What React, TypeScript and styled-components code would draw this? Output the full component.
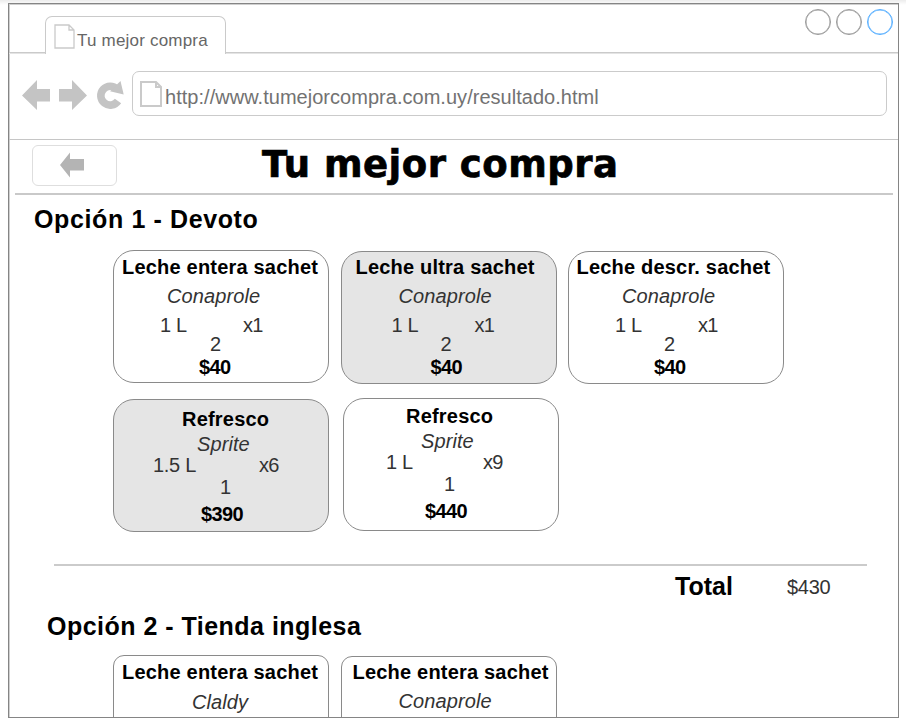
import React from 'react';
import styled, { createGlobalStyle } from 'styled-components';

const Global = createGlobalStyle`
  * { box-sizing: border-box; }
  body {
    margin: 0;
    background: linear-gradient(#ececec, #f8f8f8 3px, #fff 5px) no-repeat #fff;
    font-family: "Liberation Sans", Arial, sans-serif;
    color: #000;
    overflow: hidden;
  }
`;

const Window = styled.div`
  width: 891px;
  height: 715px;
  margin: 3px 0 0 8px;
  border: 1px solid #858585;
  box-shadow: inset 1px 1px #cfcfcf;
  background: #fff;
  overflow: hidden;
  display: flex;
  flex-direction: column;
`;

const TabStrip = styled.div`
  height: 50px;
  flex: none;
  display: flex;
  justify-content: space-between;
  align-items: flex-end;
  padding: 0 5px 0 36px;
  box-shadow: inset 0 -1px #e4e4e4, inset 0 -2px #cacaca;
`;

const Tab = styled.div`
  width: 181px;
  height: 38px;
  display: flex;
  align-items: flex-start;
  border: 1px solid #cacaca;
  border-bottom: none;
  border-radius: 7px 7px 0 0;
  background: #fff;
  padding: 7px 0 0 8px;
`;

const TabLabel = styled.span`
  margin: 8px 0 0 2px;
  font-size: 17px;
  line-height: 18px;
  letter-spacing: 0.2px;
  color: #666;
  white-space: nowrap;
`;

const Controls = styled.div`
  display: flex;
  gap: 5px;
  align-self: flex-start;
  margin-top: 5px;
`;

const Control = styled.span<{ $color: string }>`
  width: 26px;
  height: 26px;
  border: 1px solid ${(p) => p.$color};
  border-radius: 50%;
  box-shadow: inset 0 0 0 0.5px ${(p) => p.$color};
`;

const NavBar = styled.div`
  height: 86px;
  flex: none;
  display: flex;
  align-items: flex-start;
  padding: 17px 11px 0 13px;
  border-bottom: 1px solid #c6c6c6;
`;

const NavIcons = styled.div`
  width: 110px;
  height: 44px;
  flex: none;
`;

const Address = styled.div`
  flex: 1;
  height: 45px;
  display: flex;
  align-items: flex-start;
  border: 1px solid #cbcbcb;
  border-radius: 7px;
  padding: 9px 0 0 7px;
`;

const Url = styled.span`
  margin: 6px 0 0 3px;
  font-size: 20px;
  line-height: 20px;
  letter-spacing: 0.03px;
  color: #727272;
  white-space: nowrap;
`;

const TitleBar = styled.div`
  height: 55px;
  flex: none;
  display: flex;
  align-items: flex-start;
  margin: 0 5px 0 6px;
  padding: 5px 0 0 17px;
  border-bottom: 2px solid #c9c9c9;
`;

const BackButton = styled.button`
  width: 85px;
  height: 41px;
  padding: 0 0 1px 27px;
  display: flex;
  align-items: center;
  border: 1px solid #dedede;
  border-radius: 6px;
  background: #fff;
`;

const PageTitle = styled.h1`
  margin: 0 0 0 145px;
  font: bold 37px/40px "DejaVu Sans", Verdana, sans-serif;
  letter-spacing: 0.5px;
  -webkit-text-stroke: 0.7px #000;
  white-space: nowrap;
`;

const Heading = styled.h2<{ $x: number; $gap: number; $ls: number }>`
  margin: ${(p) => p.$gap}px 0 0 ${(p) => p.$x}px;
  flex: none;
  font-size: 25px;
  line-height: 26px;
  letter-spacing: ${(p) => p.$ls}px;
  white-space: nowrap;
`;

const CardRow = styled.div<{ $gap: number; $between: number }>`
  display: flex;
  flex: none;
  gap: ${(p) => p.$between}px;
  margin: ${(p) => p.$gap}px 0 0 104px;
`;

const CardBox = styled.article<{ $shaded?: boolean; $drop: number; $radius: number }>`
  width: 216px;
  height: 133px;
  flex: none;
  margin-top: ${(p) => p.$drop}px;
  border: 1px solid #8a8a8a;
  border-radius: ${(p) => p.$radius}px;
  background: ${(p) => (p.$shaded ? '#e5e5e5' : '#fff')};
`;

const Line = styled.div<{ $gap: number; $x: number }>`
  display: flex;
  height: 20px;
  margin-top: ${(p) => p.$gap}px;
  padding-left: ${(p) => p.$x}px;
  font-size: 20px;
  line-height: 20px;
  white-space: nowrap;
  color: #333;
`;

const Name = styled(Line).attrs({ as: 'h3' })`
  margin-bottom: 0;
  margin-left: 0;
  font-weight: bold;
  letter-spacing: 0.2px;
  color: #000;
`;

const Brand = styled(Line)`
  font-style: italic;
  letter-spacing: 0.1px;
`;

const Price = styled(Line)`
  font-weight: bold;
  letter-spacing: -0.6px;
  color: #000;
`;

const Size = styled.span<{ $w: number }>`
  width: ${(p) => p.$w}px;
  letter-spacing: -0.3px;
`;

const Pack = styled.span`
  letter-spacing: -0.8px;
`;

const TotalBar = styled.div`
  display: flex;
  flex: none;
  align-items: flex-start;
  height: 36px;
  margin: 32px 31px 0 45px;
  border-top: 2px solid #cbcbcb;
`;

const TotalLabel = styled.strong`
  width: 112px;
  margin: 7px 0 0 621px;
  font-size: 25px;
  line-height: 26px;
`;

const TotalValue = styled.span`
  margin-top: 11px;
  font-size: 20px;
  line-height: 20px;
  letter-spacing: -0.3px;
  color: #333;
`;

type Product = {
  name: string;
  brand: string;
  size?: string;
  pack?: string;
  qty?: string;
  price?: string;
  shaded?: boolean;
  drop?: number;
  radius?: number;
  sizeWidth?: number;
  x: number[];
  gaps: number[];
};

const firstRow: Product[] = [
  { name: 'Leche entera sachet', brand: 'Conaprole', size: '1 L', pack: 'x1', qty: '2', price: '$40', x: [8, 53, 46, 96, 85], gaps: [6, 9, 9, -1, 3], sizeWidth: 83 },
  { name: 'Leche ultra sachet', brand: 'Conaprole', size: '1 L', pack: 'x1', qty: '2', price: '$40', shaded: true, drop: 1, x: [14, 57, 50, 99, 89], gaps: [5, 9, 9, -1, 3], sizeWidth: 83 },
  { name: 'Leche descr. sachet', brand: 'Conaprole', size: '1 L', pack: 'x1', qty: '2', price: '$40', drop: 1, x: [7.5, 53, 46, 95, 85], gaps: [5, 9, 9, -1, 3], sizeWidth: 83 },
];

const secondRow: Product[] = [
  { name: 'Refresco', brand: 'Sprite', size: '1.5 L', pack: 'x6', qty: '1', price: '$390', shaded: true, drop: 1, x: [68, 83, 39, 106, 87], gaps: [9, 5, 1, 2, 7], sizeWidth: 106 },
  { name: 'Refresco', brand: 'Sprite', size: '1 L', pack: 'x9', qty: '1', price: '$440', x: [62, 77, 42, 100, 81], gaps: [7, 5, 1, 2, 7], sizeWidth: 97 },
];

const thirdRow: Product[] = [
  { name: 'Leche entera sachet', brand: 'Claldy', radius: 11, x: [8, 78], gaps: [6, 10] },
  { name: 'Leche entera sachet', brand: 'Conaprole', radius: 11, drop: 1, x: [11, 57], gaps: [5, 9] },
];

function Card({ p }: { p: Product }) {
  return (
    <CardBox $shaded={p.shaded} $drop={p.drop ?? 0} $radius={p.radius ?? 21}>
      <Name $gap={p.gaps[0]} $x={p.x[0]}>{p.name}</Name>
      <Brand $gap={p.gaps[1]} $x={p.x[1]}>{p.brand}</Brand>
      {p.size && (
        <>
          <Line $gap={p.gaps[2]} $x={p.x[2]}>
            <Size $w={p.sizeWidth ?? 83}>{p.size}</Size>
            <Pack>{p.pack}</Pack>
          </Line>
          <Line $gap={p.gaps[3]} $x={p.x[3]}>{p.qty}</Line>
          <Price $gap={p.gaps[4]} $x={p.x[4]}>{p.price}</Price>
        </>
      )}
    </CardBox>
  );
}

const PageIcon = ({ w, h, stroke }: { w: number; h: number; stroke: number }) => (
  <svg width={w} height={h} viewBox={`0 0 ${w} ${h}`} fill="none" stroke="#cacaca" strokeWidth={stroke}>
    <path d={`M1 1H${w - 6}L${w - 1} 6V${h - 1}H1ZM${w - 6} 1V6H${w - 1}`} />
  </svg>
);

export default function App() {
  return (
    <>
      <Global />
      <Window>
        <TabStrip>
          <Tab>
            <PageIcon w={21} h={25} stroke={1.3} />
            <TabLabel>Tu mejor compra</TabLabel>
          </Tab>
          <Controls>
            <Control $color="#999" />
            <Control $color="#999" />
            <Control $color="#55aeff" />
          </Controls>
        </TabStrip>

        <NavBar>
          <NavIcons>
            <svg width="104" height="44" viewBox="22 71 104 44" fill="#c4c4c4">
              <path d="M22 95.5L37 80V89H50V101.5H37V110Z" />
              <path d="M87 95.5L72 80V89H59V101.5H72V110Z" />
              <path
                d="M118 101A9.4 9.4 0 1 1 117 89.2"
                fill="none"
                stroke="#c4c4c4"
                strokeWidth="7.6"
              />
              <path d="M120.5 81L123.7 94.5L110 91.2Z" />
            </svg>
          </NavIcons>
          <Address>
            <PageIcon w={22} h={26} stroke={2} />
            <Url>http://www.tumejorcompra.com.uy/resultado.html</Url>
          </Address>
        </NavBar>

        <TitleBar>
          <BackButton aria-label="Volver">
            <svg width="24" height="26" viewBox="0 0 24 26" fill="#b4b4b4">
              <path d="M0 13L10 0.5V7H24V18.5H10V25.5Z" />
            </svg>
          </BackButton>
          <PageTitle>Tu mejor compra</PageTitle>
        </TitleBar>

        <Heading $x={25} $gap={11} $ls={0.62}>Opción 1 - Devoto</Heading>
        <CardRow $gap={18} $between={11.5}>
          {firstRow.map((p) => <Card key={p.name} p={p} />)}
        </CardRow>
        <CardRow $gap={14} $between={14}>
          {secondRow.map((p) => <Card key={p.price} p={p} />)}
        </CardRow>
        <TotalBar>
          <TotalLabel>Total</TotalLabel>
          <TotalValue>$430</TotalValue>
        </TotalBar>
        <Heading $x={38} $gap={13} $ls={0.48}>Opción 2 - Tienda inglesa</Heading>
        <CardRow $gap={16} $between={11.5}>
          {thirdRow.map((p) => <Card key={p.brand} p={p} />)}
        </CardRow>
      </Window>
    </>
  );
}
